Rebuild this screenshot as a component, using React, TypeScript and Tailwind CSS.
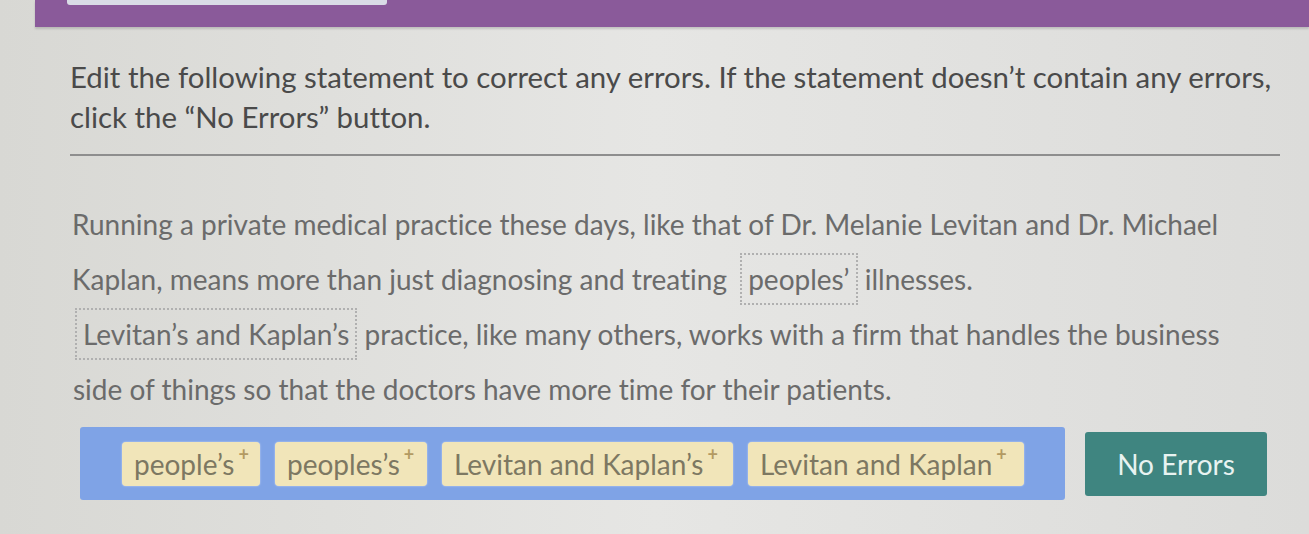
import React from "react";

const Chip = ({ label, w }: { label: string; w: string }) => (
  <div className={`flex h-[44px] items-center rounded-[4px] bg-[#f1e5b9] pl-[12px] text-[28px] text-[#7d7862] shadow-[0_0_2px_rgba(255,255,255,0.6)] ${w}`}>
    <span>{label}</span>
    <span className="relative -top-[10px] ml-[4px] text-[18px] font-bold leading-none text-[#b39a62]">+</span>
  </div>
);

export default function App() {
  return (
    <div
      className="relative h-[534px] w-[1309px] overflow-hidden bg-gradient-to-r from-[#d8d8d4] via-[#e6e6e4] to-[#dcdcda] [font-variant-ligatures:none]"
      style={{ fontFamily: "Lato, 'Noto Sans', sans-serif" }}
    >
      <div className="ml-[35px] h-[27px] bg-[#8a5a9a] shadow-[0_2px_2px_rgba(0,0,0,0.15)]">
        <div className="ml-[32px] h-[5px] w-[320px] rounded-b-[3px] bg-[#d9dce6]" />
      </div>

      <div className="ml-[70px] mt-[30px] w-[1210px]">
        <div className="text-[29.4px] leading-[40px] text-[#4a4a4a]">
          <div className="whitespace-nowrap">
            Edit the following statement to correct any errors. If the statement doesn’t contain any errors,
          </div>
          <div className="whitespace-nowrap">click the “No Errors” button.</div>
        </div>
        <div className="mt-[17px] h-[2px] w-[1210px] bg-[#8e8e8e]" />

        <div className="mt-[41px] text-[28px] leading-[55px] text-[#6b6b6b]">
          <div className="whitespace-nowrap pl-[2px]">
            Running a private medical practice these days, like that of Dr. Melanie Levitan and Dr. Michael
          </div>
          <div className="whitespace-nowrap pl-[2px]">
            Kaplan, means more than just diagnosing and treating{" "}
            <span className="ml-[6px] inline-block h-[52px] border-2 border-dotted border-[#b0b0b0] px-[6px] leading-[48px]">
              peoples’
            </span>{" "}
            illnesses.
          </div>
          <div className="whitespace-nowrap pl-[5px]">
            <span className="inline-block h-[52px] border-2 border-dotted border-[#b0b0b0] px-[6px] leading-[48px]">
              Levitan’s and Kaplan’s
            </span>{" "}
            practice, like many others, works with a firm that handles the business
          </div>
          <div className="whitespace-nowrap pl-[3px]">
            side of things so that the doctors have more time for their patients.
          </div>
        </div>
      </div>

      <div className="ml-[80px] mt-[10px] flex items-center">
        <div className="flex h-[73px] w-[985px] items-center gap-[15px] rounded-[3px] bg-[#7fa3e6] pl-[42px]">
          <Chip label="people’s" w="w-[138px]" />
          <Chip label="peoples’s" w="w-[152px]" />
          <Chip label="Levitan and Kaplan’s" w="w-[291px]" />
          <Chip label="Levitan and Kaplan" w="w-[276px]" />
        </div>
        <div className="ml-[20px] flex h-[64px] w-[182px] items-center justify-center rounded-[3px] bg-[#3f8580] text-[28px] text-[#e8f3f1]">
          No Errors
        </div>
      </div>
    </div>
  );
}
